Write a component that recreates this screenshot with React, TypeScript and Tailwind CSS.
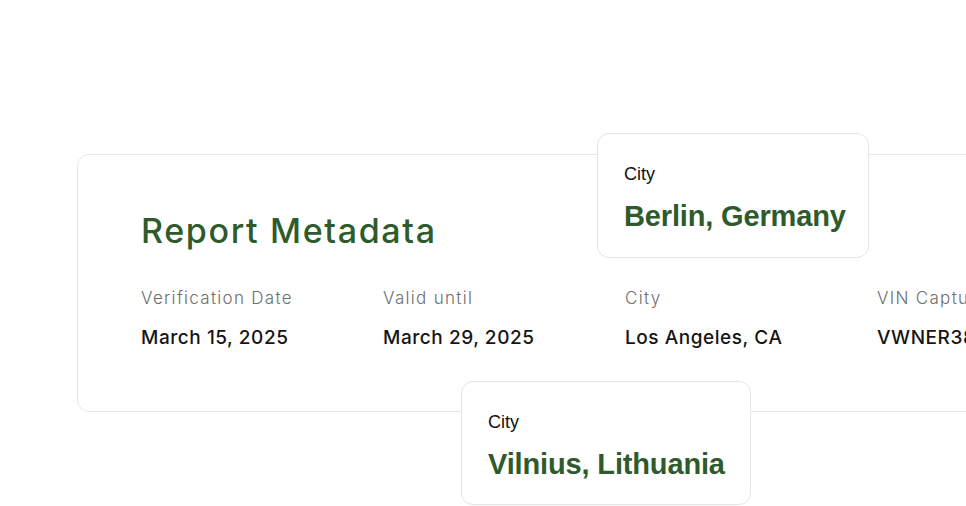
const fields = [
  { label: "Verification Date", value: "March 15, 2025" },
  { label: "Valid until", value: "March 29, 2025" },
  { label: "City", value: "Los Angeles, CA" },
  { label: "VIN Captured", value: "VWNER3829AB1" },
];

function CityCard({ city, className }: { city: string; className: string }) {
  return (
    <div
      className={`absolute bg-white border border-[#e4e4e4] rounded-[12px] px-[26px] pt-[28px] font-['Liberation_Sans',sans-serif] ${className}`}
    >
      <div className="text-[18px] leading-[24px] text-[#111]">City</div>
      <div className="mt-[14px] text-[29px] leading-[32px] font-bold text-[#2e5a2c] tracking-[-0.15px] whitespace-nowrap">
        {city}
      </div>
    </div>
  );
}

export default function App() {
  return (
    <div className="relative w-[966px] h-[506px] overflow-hidden bg-white">
      {/* Main metadata card */}
      <div className="ml-[77px] mt-[154px] w-[1000px] h-[258px] border border-[#e6e6e6] rounded-[12px] bg-white pl-[63px] pt-[56px] font-['Inter',sans-serif]">
        <h1 className="text-[34px] leading-[40px] text-[#2e5a2c] font-medium tracking-[1.65px]">
          Report Metadata
        </h1>
        <div className="mt-[35px] grid grid-cols-[242px_242px_252px_242px]">
          {fields.map((f, i) => (
            <div key={i} className="whitespace-nowrap">
              <div className="text-[17px] leading-[24px] text-[#6e6e6e] font-light tracking-[1.3px]">
                {f.label}
              </div>
              <div className="mt-[15px] text-[19px] leading-[26px] text-[#151515] font-medium tracking-[0.55px]">
                {f.value}
              </div>
            </div>
          ))}
        </div>
      </div>

      <CityCard city="Berlin, Germany" className="left-[597px] top-[133px] w-[272px] h-[125px]" />
      <CityCard city="Vilnius, Lithuania" className="left-[461px] top-[381px] w-[290px] h-[124px]" />
    </div>
  );
}
